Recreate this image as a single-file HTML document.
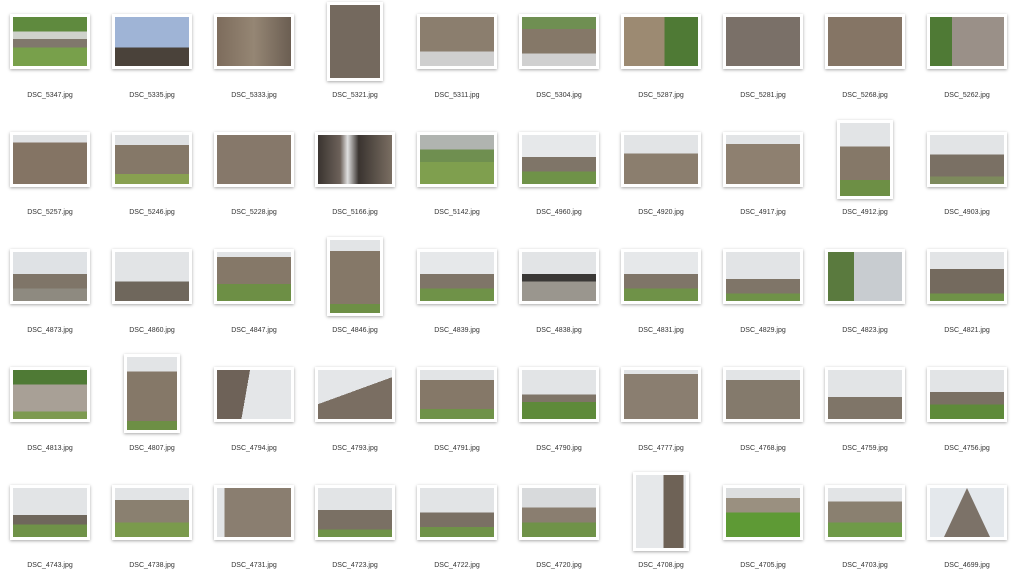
<!DOCTYPE html>
<html><head><meta charset="utf-8"><style>
body{margin:0;width:1024px;height:578px;background:#fff;position:relative;overflow:hidden;font-family:"Liberation Sans",sans-serif}
.f{position:absolute;background:#fff;padding:3px;box-shadow:0 1px 3px rgba(0,0,0,.35)}
.f i{display:block;width:74px;height:49px}
.f.p i{width:50px;height:73px}
.l{position:absolute;width:100px;text-align:center;font-size:7px;color:#333}
.A{background:linear-gradient(#e2e4e6 0 32%,#857868 32% 78%,#6d8f45 78%)}
.B{background:linear-gradient(90deg,#7d6c5c,#958674 50%,#6b5e52)}
.C{background:linear-gradient(#e2e4e6 0 38%,#8b7e6e 38%)}
.D{background:linear-gradient(#e6e8ea 0 45%,#7f7568 45% 75%,#6f9248 75%)}
.G{background:linear-gradient(#5f8a3e 0 30%,#cfd2cc 30% 45%,#80786c 45% 62%,#78a04b 62%)}
.S{background:linear-gradient(#9fb4d6 0 62%,#4a423a 62%)}
.T{background:linear-gradient(#e6e8ea 0 30%,#7d7367 30%)}
.K{background:linear-gradient(90deg,#3a3430,#6d625a 30%,#e0e0e0 40%,#3a3430 55%,#7a6e62)}
</style></head><body>
<!-- row 1 -->
<div class="f" style="left:10px;top:14px"><i class="G"></i></div><div class="l" style="left:0;top:92px">DSC_5347.jpg</div>
<div class="f" style="left:112px;top:14px"><i class="S"></i></div><div class="l" style="left:102px;top:92px">DSC_5335.jpg</div>
<div class="f" style="left:214px;top:14px"><i class="B"></i></div><div class="l" style="left:204px;top:92px">DSC_5333.jpg</div>
<div class="f p" style="left:327px;top:2px"><i class="B" style="background:#74695e"></i></div><div class="l" style="left:305px;top:92px">DSC_5321.jpg</div>
<div class="f" style="left:417px;top:14px"><i class="C" style="background:linear-gradient(#8b7e6e 0 70%,#cfcfcf 70%)"></i></div><div class="l" style="left:407px;top:92px">DSC_5311.jpg</div>
<div class="f" style="left:519px;top:14px"><i style="background:linear-gradient(#6f8f52 0 25%,#857868 25% 75%,#d0d0d0 75%)"></i></div><div class="l" style="left:509px;top:92px">DSC_5304.jpg</div>
<div class="f" style="left:621px;top:14px"><i style="background:linear-gradient(90deg,#9c8a72 0 55%,#4f7a35 55%)"></i></div><div class="l" style="left:611px;top:92px">DSC_5287.jpg</div>
<div class="f" style="left:723px;top:14px"><i class="B" style="background:#7a7068"></i></div><div class="l" style="left:713px;top:92px">DSC_5281.jpg</div>
<div class="f" style="left:825px;top:14px"><i class="B" style="background:#857565"></i></div><div class="l" style="left:815px;top:92px">DSC_5268.jpg</div>
<div class="f" style="left:927px;top:14px"><i style="background:linear-gradient(90deg,#4f7a35 0 30%,#9a9088 30%)"></i></div><div class="l" style="left:917px;top:92px">DSC_5262.jpg</div>
<!-- row 2 -->
<div class="f" style="left:10px;top:132px"><i class="T" style="background:linear-gradient(#dfe1e3 0 15%,#847464 15%)"></i></div><div class="l" style="left:0;top:209px">DSC_5257.jpg</div>
<div class="f" style="left:112px;top:132px"><i class="D" style="background:linear-gradient(#dfe1e3 0 20%,#857868 20% 80%,#88a050 80%)"></i></div><div class="l" style="left:102px;top:209px">DSC_5246.jpg</div>
<div class="f" style="left:214px;top:132px"><i class="B" style="background:#86786a"></i></div><div class="l" style="left:204px;top:209px">DSC_5228.jpg</div>
<div class="f" style="left:315px;top:132px"><i class="K"></i></div><div class="l" style="left:305px;top:209px">DSC_5166.jpg</div>
<div class="f" style="left:417px;top:132px"><i class="G" style="background:linear-gradient(#b0b4b0 0 30%,#6f8f50 30% 55%,#7f9f4e 55%)"></i></div><div class="l" style="left:407px;top:209px">DSC_5142.jpg</div>
<div class="f" style="left:519px;top:132px"><i class="D"></i></div><div class="l" style="left:509px;top:209px">DSC_4960.jpg</div>
<div class="f" style="left:621px;top:132px"><i class="C"></i></div><div class="l" style="left:611px;top:209px">DSC_4920.jpg</div>
<div class="f" style="left:723px;top:132px"><i class="T" style="background:linear-gradient(#e2e4e6 0 18%,#8e8070 18%)"></i></div><div class="l" style="left:713px;top:209px">DSC_4917.jpg</div>
<div class="f p" style="left:837px;top:120px"><i class="A"></i></div><div class="l" style="left:815px;top:209px">DSC_4912.jpg</div>
<div class="f" style="left:927px;top:132px"><i class="D" style="background:linear-gradient(#e2e4e6 0 40%,#7a7064 40% 85%,#7d8a5c 85%)"></i></div><div class="l" style="left:917px;top:209px">DSC_4903.jpg</div>
<!-- row 3 -->
<div class="f" style="left:10px;top:249px"><i class="D" style="background:linear-gradient(#dfe2e5 0 45%,#7f7568 45% 75%,#8e8a80 75%)"></i></div><div class="l" style="left:0;top:327px">DSC_4873.jpg</div>
<div class="f" style="left:112px;top:249px"><i class="D" style="background:linear-gradient(#e2e4e6 0 60%,#6f675c 60%)"></i></div><div class="l" style="left:102px;top:327px">DSC_4860.jpg</div>
<div class="f" style="left:214px;top:249px"><i class="A" style="background:linear-gradient(#e2e4e6 0 10%,#857868 10% 65%,#6d8f45 65%)"></i></div><div class="l" style="left:204px;top:327px">DSC_4847.jpg</div>
<div class="f p" style="left:327px;top:237px"><i class="A" style="background:linear-gradient(#e2e4e6 0 15%,#857868 15% 88%,#6d8f45 88%)"></i></div><div class="l" style="left:305px;top:327px">DSC_4846.jpg</div>
<div class="f" style="left:417px;top:249px"><i class="D"></i></div><div class="l" style="left:407px;top:327px">DSC_4839.jpg</div>
<div class="f" style="left:519px;top:249px"><i class="D" style="background:linear-gradient(#e2e4e6 0 45%,#3a3836 45% 60%,#9a968e 60%)"></i></div><div class="l" style="left:509px;top:327px">DSC_4838.jpg</div>
<div class="f" style="left:621px;top:249px"><i class="D"></i></div><div class="l" style="left:611px;top:327px">DSC_4831.jpg</div>
<div class="f" style="left:723px;top:249px"><i class="D" style="background:linear-gradient(#e2e4e6 0 55%,#7f7568 55% 85%,#6f9248 85%)"></i></div><div class="l" style="left:713px;top:327px">DSC_4829.jpg</div>
<div class="f" style="left:825px;top:249px"><i style="background:linear-gradient(90deg,#5a7a3e 0 35%,#c8ccd0 35%)"></i></div><div class="l" style="left:815px;top:327px">DSC_4823.jpg</div>
<div class="f" style="left:927px;top:249px"><i class="D" style="background:linear-gradient(#e2e4e6 0 35%,#746a5e 35% 85%,#6f9248 85%)"></i></div><div class="l" style="left:917px;top:327px">DSC_4821.jpg</div>
<!-- row 4 -->
<div class="f" style="left:10px;top:367px"><i class="G" style="background:linear-gradient(#4f7a35 0 30%,#a8a096 30% 85%,#7d9a50 85%)"></i></div><div class="l" style="left:0;top:445px">DSC_4813.jpg</div>
<div class="f p" style="left:124px;top:354px"><i class="A" style="background:linear-gradient(#e2e4e6 0 20%,#857868 20% 88%,#6d8f45 88%)"></i></div><div class="l" style="left:102px;top:445px">DSC_4807.jpg</div>
<div class="f" style="left:214px;top:367px"><i class="C" style="background:linear-gradient(100deg,#6e6258 0 40%,#e4e6e8 40%)"></i></div><div class="l" style="left:204px;top:445px">DSC_4794.jpg</div>
<div class="f" style="left:315px;top:367px"><i class="C" style="background:linear-gradient(160deg,#e4e6e8 0 45%,#7a6e62 45%)"></i></div><div class="l" style="left:305px;top:445px">DSC_4793.jpg</div>
<div class="f" style="left:417px;top:367px"><i class="D" style="background:linear-gradient(#e2e4e6 0 20%,#857868 20% 80%,#6f9248 80%)"></i></div><div class="l" style="left:407px;top:445px">DSC_4791.jpg</div>
<div class="f" style="left:519px;top:367px"><i class="D" style="background:linear-gradient(#e2e4e6 0 50%,#7f7568 50% 65%,#5e8a3a 65%)"></i></div><div class="l" style="left:509px;top:445px">DSC_4790.jpg</div>
<div class="f" style="left:621px;top:367px"><i class="T" style="background:linear-gradient(#e2e4e6 0 8%,#8a7e70 8%)"></i></div><div class="l" style="left:611px;top:445px">DSC_4777.jpg</div>
<div class="f" style="left:723px;top:367px"><i class="T" style="background:linear-gradient(#e2e4e6 0 20%,#847a6c 20%)"></i></div><div class="l" style="left:713px;top:445px">DSC_4768.jpg</div>
<div class="f" style="left:825px;top:367px"><i class="D" style="background:linear-gradient(#e2e4e6 0 55%,#7f7568 55%)"></i></div><div class="l" style="left:815px;top:445px">DSC_4759.jpg</div>
<div class="f" style="left:927px;top:367px"><i class="D" style="background:linear-gradient(#e2e4e6 0 45%,#7a7064 45% 70%,#5e8a3a 70%)"></i></div><div class="l" style="left:917px;top:445px">DSC_4756.jpg</div>
<!-- row 5 -->
<div class="f" style="left:10px;top:485px"><i class="D" style="background:linear-gradient(#e2e4e6 0 55%,#6f675c 55% 75%,#6f9248 75%)"></i></div><div class="l" style="left:0;top:562px">DSC_4743.jpg</div>
<div class="f" style="left:112px;top:485px"><i class="D" style="background:linear-gradient(#e2e4e6 0 25%,#8a8070 25% 70%,#7a9a4c 70%)"></i></div><div class="l" style="left:102px;top:562px">DSC_4738.jpg</div>
<div class="f" style="left:214px;top:485px"><i class="C" style="background:linear-gradient(90deg,#e2e4e6 0 10%,#8a7e70 10%)"></i></div><div class="l" style="left:204px;top:562px">DSC_4731.jpg</div>
<div class="f" style="left:315px;top:485px"><i class="D" style="background:linear-gradient(#e2e4e6 0 45%,#7a7064 45% 85%,#6f9248 85%)"></i></div><div class="l" style="left:305px;top:562px">DSC_4723.jpg</div>
<div class="f" style="left:417px;top:485px"><i class="D" style="background:linear-gradient(#e2e4e6 0 50%,#7a7064 50% 80%,#6f9248 80%)"></i></div><div class="l" style="left:407px;top:562px">DSC_4722.jpg</div>
<div class="f" style="left:519px;top:485px"><i class="D" style="background:linear-gradient(#d8dadc 0 40%,#8a7e70 40% 70%,#6f9248 70%)"></i></div><div class="l" style="left:509px;top:562px">DSC_4720.jpg</div>
<div class="f p" style="left:633px;top:472px"><i style="background:linear-gradient(90deg,#e6e8ea 0 55%,#6e6256 55% 95%,#e6e8ea 95%)"></i></div><div class="l" style="left:611px;top:562px">DSC_4708.jpg</div>
<div class="f" style="left:723px;top:485px"><i class="G" style="background:linear-gradient(#dcdedf 0 20%,#9a9080 20% 50%,#5e9a35 50%)"></i></div><div class="l" style="left:713px;top:562px">DSC_4705.jpg</div>
<div class="f" style="left:825px;top:485px"><i class="D" style="background:linear-gradient(#e2e4e6 0 28%,#8a8070 28% 70%,#6f9a48 70%)"></i></div><div class="l" style="left:815px;top:562px">DSC_4703.jpg</div>
<div class="f" style="left:927px;top:485px"><i style="background:linear-gradient(#e4e8ec,#e4e8ec);position:relative"><span style="position:absolute;left:14px;top:0;width:0;height:0;border-left:23px solid transparent;border-right:23px solid transparent;border-bottom:49px solid #7c7268"></span></i></div><div class="l" style="left:917px;top:562px">DSC_4699.jpg</div>
</body></html>
